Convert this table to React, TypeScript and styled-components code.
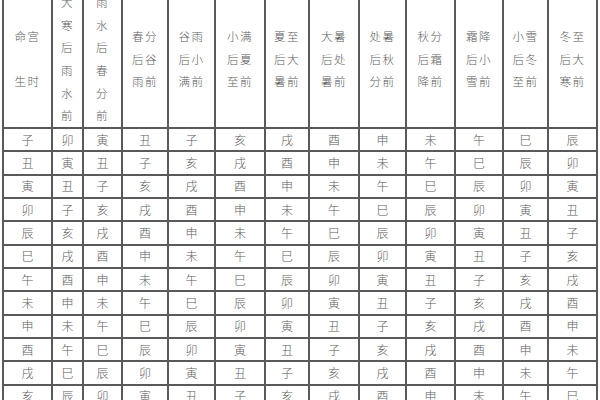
import React from 'react';
import styled, { createGlobalStyle } from 'styled-components';

const GlobalStyle = createGlobalStyle`
  html, body {
    margin: 0;
    padding: 0;
    background: #ffffff;
  }
  body {
    width: 600px;
    height: 400px;
    overflow: hidden;
    font-family: "Noto Sans CJK SC", "Noto Sans", sans-serif;
  }
`;

const BRANCHES = ['子', '丑', '寅', '卯', '辰', '巳', '午', '未', '申', '酉', '戌', '亥'];

// 每列对应的节气区间
const HEADERS: { label: string[]; vertical?: boolean }[] = [
  { label: ['大寒后雨水前'], vertical: true },
  { label: ['雨水后春分前'], vertical: true },
  { label: ['春分', '后谷', '雨前'] },
  { label: ['谷雨', '后小', '满前'] },
  { label: ['小满', '后夏', '至前'] },
  { label: ['夏至', '后大', '暑前'] },
  { label: ['大暑', '后处', '暑前'] },
  { label: ['处暑', '后秋', '分前'] },
  { label: ['秋分', '后霜', '降前'] },
  { label: ['霜降', '后小', '雪前'] },
  { label: ['小雪', '后冬', '至前'] },
  { label: ['冬至', '后大', '寒前'] },
];

const COLS = [47, 29, 37, 44, 45, 48, 42, 48, 45, 47, 46, 43, 47];

const Page = styled.div`
  width: 600px;
  height: 400px;
  overflow: hidden;
  padding-left: 2px;
  box-sizing: border-box;
`;

const Grid = styled.div`
  display: inline-grid;
  grid-template-columns: ${COLS.map((c) => `${c}px`).join(' ')};
  grid-template-rows: 136px repeat(12, 21.33px);
  gap: 2px;
  padding: 2px;
  margin-top: -11px;
  background: #5a5a5a;
`;

const Cell = styled.div<{ $head?: boolean }>`
  background: #ffffff;
  display: flex;
  align-items: center;
  justify-content: center;
  text-align: center;
  color: #5c5c5c;
  font-weight: 300;
  font-size: ${(p) => (p.$head ? '11.5px' : '12px')};
  line-height: ${(p) => (p.$head ? '22.7px' : '1')};
  letter-spacing: ${(p) => (p.$head ? '1.5px' : '0')};
`;

const HeadText = styled.div<{ $vertical?: boolean }>`
  display: flex;
  flex-direction: column;
  align-items: center;
  white-space: nowrap;
`;

const Line = styled.span`
  display: block;
  min-height: 22.7px;
`;

export default function App() {
  return (
    <>
      <GlobalStyle />
      <Page>
        <Grid>
          <Cell $head>
            <HeadText>
              <Line>命宫</Line>
              <Line />
              <Line>生时</Line>
            </HeadText>
          </Cell>
          {HEADERS.map((h, i) => (
            <Cell $head key={`h${i}`}>
              <HeadText $vertical={h.vertical}>
                {h.vertical
                  ? Array.from(h.label[0]).map((ch, j) => <Line key={j}>{ch}</Line>)
                  : h.label.map((l, j) => <Line key={j}>{l}</Line>)}
              </HeadText>
            </Cell>
          ))}
          {BRANCHES.map((b, r) => (
            <React.Fragment key={b}>
              <Cell>{b}</Cell>
              {HEADERS.map((_, k) => (
                <Cell key={k}>{BRANCHES[(((3 - k - r) % 12) + 12) % 12]}</Cell>
              ))}
            </React.Fragment>
          ))}
        </Grid>
      </Page>
    </>
  );
}
